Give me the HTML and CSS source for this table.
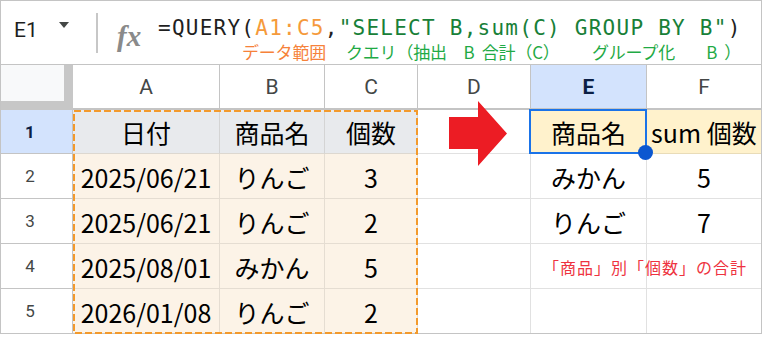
FILE: index.html
```html
<!DOCTYPE html>
<html lang="ja">
<head>
<meta charset="utf-8">
<title>QUERY</title>
<link rel="stylesheet" href="styles.css">
</head>
<body>
<div class="app">
  <div class="fbar">
    <div class="namebox"><span class="cellref">E1</span><span class="tri"></span></div>
    <div class="sep"></div>
    <div class="fx">fx</div>
    <div class="formula">
      <div class="fline"><span class="k">=QUERY(</span><span class="rng">A1:C5</span><span class="k">,</span><span class="str">"SELECT B,sum(C) GROUP BY B"</span><span class="k">)</span></div>
      <div class="note"><span class="n-or">データ範囲</span><span class="n-gr">クエリ（抽出　B&nbsp;&nbsp;合計（C）　　&nbsp;&nbsp;グループ化　&nbsp;&nbsp;&nbsp;&nbsp;B&nbsp;&nbsp;）</span></div>
    </div>
  </div>
  <div class="sheet">
    <div class="corner"><div class="corner-in"></div></div>
    <div class="c ch">A</div>
    <div class="c ch">B</div>
    <div class="c ch">C</div>
    <div class="c ch">D</div>
    <div class="c ch ch-sel">E</div>
    <div class="c ch last">F</div>

    <div class="c rh rh-sel">1</div>
    <div class="c hd">日付</div>
    <div class="c hd">商品名</div>
    <div class="c hd">個数</div>
    <div class="c"></div>
    <div class="c yl sel">商品名<span class="selbox"></span><span class="handle"></span></div>
    <div class="c yl last left">sum 個数</div>

    <div class="c rh">2</div>
    <div class="c dt">2025/06/21</div>
    <div class="c dt">りんご</div>
    <div class="c dt">3</div>
    <div class="c"></div>
    <div class="c">みかん</div>
    <div class="c last">5</div>

    <div class="c rh">3</div>
    <div class="c dt">2025/06/21</div>
    <div class="c dt">りんご</div>
    <div class="c dt">2</div>
    <div class="c"></div>
    <div class="c">りんご</div>
    <div class="c last">7</div>

    <div class="c rh">4</div>
    <div class="c dt">2025/08/01</div>
    <div class="c dt">みかん</div>
    <div class="c dt">5</div>
    <div class="c"></div>
    <div class="c left memo">「商品」別「個数」の合計</div>
    <div class="c last clear"></div>

    <div class="c rh bottom">5</div>
    <div class="c dt bottom">2026/01/08</div>
    <div class="c dt bottom">りんご</div>
    <div class="c dt bottom">2</div>
    <div class="c bottom"></div>
    <div class="c bottom"></div>
    <div class="c last bottom"></div>

    <svg class="range" width="345" height="224" viewBox="0 0 345 224"><rect x="1" y="1" width="343" height="222" fill="none" stroke="#f39a2c" stroke-width="2" stroke-dasharray="7 3"/></svg>
    <svg class="arrow" width="60" height="66" viewBox="0 0 60 66"><polygon points="0,16 29,16 29,0 58,32.5 29,65 29,48 0,48" fill="#ec1c24"/></svg>
  </div>
</div>
</body>
</html>
```
FILE: styles.css
```css
html, body {
  margin: 0;
  background: #fff;
}
body {
  width: 764px;
  height: 337px;
  overflow: hidden;
}
.app {
  width: 760px;
  height: 332px;
  border: 1px solid #c4c4c4;
  display: flex;
  flex-direction: column;
}

/* formula bar */
.fbar {
  height: 64px;
  box-sizing: border-box;
  border-bottom: 1px solid #c4c4c4;
  display: flex;
  flex-shrink: 0;
}
.namebox {
  width: 95px;
  box-sizing: border-box;
  padding-left: 13px;
  padding-bottom: 5px;
  display: flex;
  align-items: center;
}
.cellref {
  font: 21px/21px Roboto, sans-serif;
  color: #1f1f1f;
}
.tri {
  width: 0;
  height: 0;
  border-left: 5px solid transparent;
  border-right: 5px solid transparent;
  border-top: 6px solid #444746;
  margin-left: 21px;
  margin-bottom: 10px;
}
.sep {
  width: 2px;
  height: 40px;
  background: #c7c7c7;
  align-self: center;
}
.fx {
  margin-left: 19px;
  width: 26px;
  align-self: center;
  font: italic bold 29px/28px "Liberation Serif", serif;
  color: #8a8a8a;
  padding-top: 6px;
}
.formula {
  margin-left: 15px;
  padding-top: 15px;
  display: flex;
  flex-direction: column;
  gap: 2px;
}
.fline {
  font: 21px/24px "DejaVu Sans Mono", monospace;
  letter-spacing: 1.25px;
  white-space: pre;
  color: #1f1f1f;
}
.rng { color: #f59a3b; }
.str { color: #188038; }
.note {
  padding-left: 84px;
  font: 17px/19px "Noto Sans CJK JP", sans-serif;
  letter-spacing: -0.2px;
  white-space: nowrap;
}
.n-or { color: #f6823a; }
.n-gr { color: #1faa45; margin-left: 20px; }

/* sheet */
.sheet {
  position: relative;
  display: grid;
  grid-template-columns: 72px 147px 105px 93px 113px 116px 114px;
  grid-template-rows: 45px 44px 45px 45px 45px 44px;
}
.corner {
  background: #c7c7c7;
}
.corner-in {
  width: 63px;
  height: 36px;
  background: #f8f9fa;
}
.c {
  box-sizing: border-box;
  border-right: 1px solid #e1e1e1;
  border-bottom: 1px solid #e1e1e1;
  display: flex;
  align-items: flex-end;
  justify-content: center;
  padding-bottom: 6px;
  font: 25px/30px "Noto Sans CJK JP", sans-serif;
  color: #000;
  white-space: nowrap;
}
.c.last { border-right: none; }
.c.bottom { border-bottom: none; }
.ch {
  border-right-color: #c4c4c4;
  border-bottom: 2px solid #c4c4c4;
  align-items: center;
  padding-bottom: 0;
  font: 21px/24px Roboto, sans-serif;
  color: #444746;
}
.ch-sel {
  background: #d3e3fd;
  color: #0b1f45;
  font-weight: bold;
}
.rh {
  border-right-color: #c4c4c4;
  border-bottom-color: #c4c4c4;
  align-items: center;
  padding: 0 13px 0 0;
  font: 17px/20px Roboto, sans-serif;
  color: #444746;
}
.rh-sel {
  background: #d3e3fd;
  color: #0b1f45;
  font-weight: bold;
}
.hd {
  background: #e8eaed;
  border-right-color: #d4d4d4;
  border-bottom-color: #ddd8d0;
}
.dt {
  background: #fcf3e7;
  border-right-color: #e5ddd2;
  border-bottom-color: #e5ddd2;
}
.yl {
  background: #fff2cc;
  border-bottom-color: #e9dcb8;
}
.left {
  justify-content: flex-start;
  padding-left: 4px;
}
.sel {
  position: relative;
}
.selbox {
  position: absolute;
  top: -1px;
  left: -2px;
  right: -1px;
  bottom: -1px;
  border: 2px solid #1a73e8;
  z-index: 2;
}
.handle {
  position: absolute;
  width: 15px;
  height: 15px;
  right: -7px;
  bottom: -7px;
  border-radius: 50%;
  background: #0b57d0;
  z-index: 3;
}
.memo {
  padding-left: 12px;
  font-size: 16px;
  letter-spacing: 1px;
  color: #ee3340;
}
.clear {
  background: transparent;
}
.range {
  position: absolute;
  left: 72px;
  top: 45px;
  z-index: 1;
}
.arrow {
  position: absolute;
  left: 448px;
  top: 36px;
  z-index: 1;
}
```
